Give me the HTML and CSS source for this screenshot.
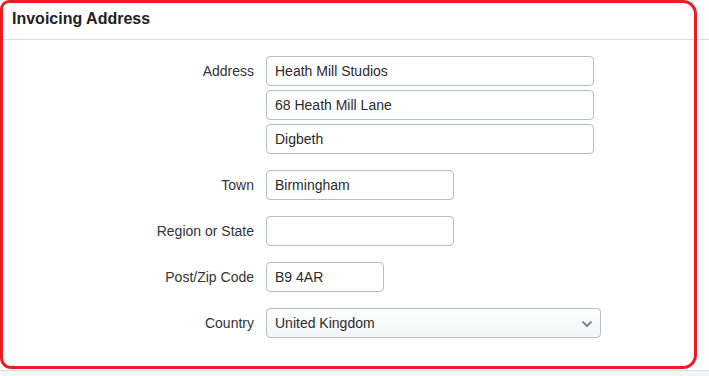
FILE: index.html
```html
<!DOCTYPE html>
<html lang="en">
<head>
    <meta charset="UTF-8">
    <meta name="viewport" content="width=device-width, initial-scale=1.0">
    <title>Invoicing Address</title>
    <link rel="stylesheet" href="styles.css">
</head>
<body>
    <div class="panel">
        <div class="panel-header">
            <h2>Invoicing Address</h2>
        </div>

        <form class="panel-body">
            <label class="form-label">Address</label>
            <div class="field-stack">
                <input class="form-input wide" type="text" value="Heath Mill Studios">
                <input class="form-input wide" type="text" value="68 Heath Mill Lane">
                <input class="form-input wide" type="text" value="Digbeth">
            </div>

            <label class="form-label">Town</label>
            <div><input class="form-input medium" type="text" value="Birmingham"></div>

            <label class="form-label">Region or State</label>
            <div><input class="form-input medium" type="text" value=""></div>

            <label class="form-label">Post/Zip Code</label>
            <div><input class="form-input short" type="text" value="B9 4AR"></div>

            <label class="form-label">Country</label>
            <div class="select-wrap">
                <select class="form-select">
                    <option>United Kingdom</option>
                </select>
                <svg class="select-arrow" width="12" height="8" viewBox="0 0 12 8">
                    <path d="M1.5 1.5 L6 6 L10.5 1.5" fill="none" stroke="#7c8791" stroke-width="2"/>
                </svg>
            </div>
        </form>

        <!-- highlight annotation drawn over the panel -->
        <div class="highlight"></div>
    </div>
</body>
</html>
```

FILE: styles.css
```css
* {
    margin: 0;
    padding: 0;
    box-sizing: border-box;
}

body {
    font-family: "Liberation Sans", Arial, sans-serif;
    background-color: #f4f5f6;
    color: #333333;
    font-size: 14px;
}

.panel {
    position: relative;
    background: #ffffff;
    border-bottom: 1px solid #dcdcdc;
    height: 371px;
}

.panel-header {
    padding: 9px 12px 11px;
    border-bottom: 1px solid #dddddd;
}

.panel-header h2 {
    font-size: 16px;
    line-height: 19px;
    font-weight: bold;
    color: #222222;
}

.panel-body {
    display: grid;
    grid-template-columns: 254px 1fr;
    column-gap: 12px;
    row-gap: 16px;
    padding-top: 16px;
    align-items: start;
}

.form-label {
    text-align: right;
    line-height: 30px;
    color: #333333;
}

.field-stack {
    display: flex;
    flex-direction: column;
    gap: 4px;
}

.form-input,
.form-select {
    display: block;
    height: 30px;
    border: 1px solid #b8bdc2;
    border-radius: 4px;
    padding: 0 8px;
    font-family: inherit;
    font-size: 14px;
    color: #2b2b2b;
    background: #ffffff;
}

.form-input.wide { width: 328px; }
.form-input.medium { width: 188px; }
.form-input.short { width: 118px; }

.select-wrap {
    position: relative;
    width: 335px;
}

.form-select {
    width: 335px;
    appearance: none;
    -webkit-appearance: none;
    background: linear-gradient(#ffffff, #f3f4f5);
}

.select-arrow {
    position: absolute;
    right: 8px;
    top: 12px;
}

.highlight {
    position: absolute;
    left: 0;
    top: 0;
    width: 697px;
    height: 369px;
    border: 3px solid #ed1c24;
    border-radius: 9px 14px 14px 11px;
    pointer-events: none;
}
```
